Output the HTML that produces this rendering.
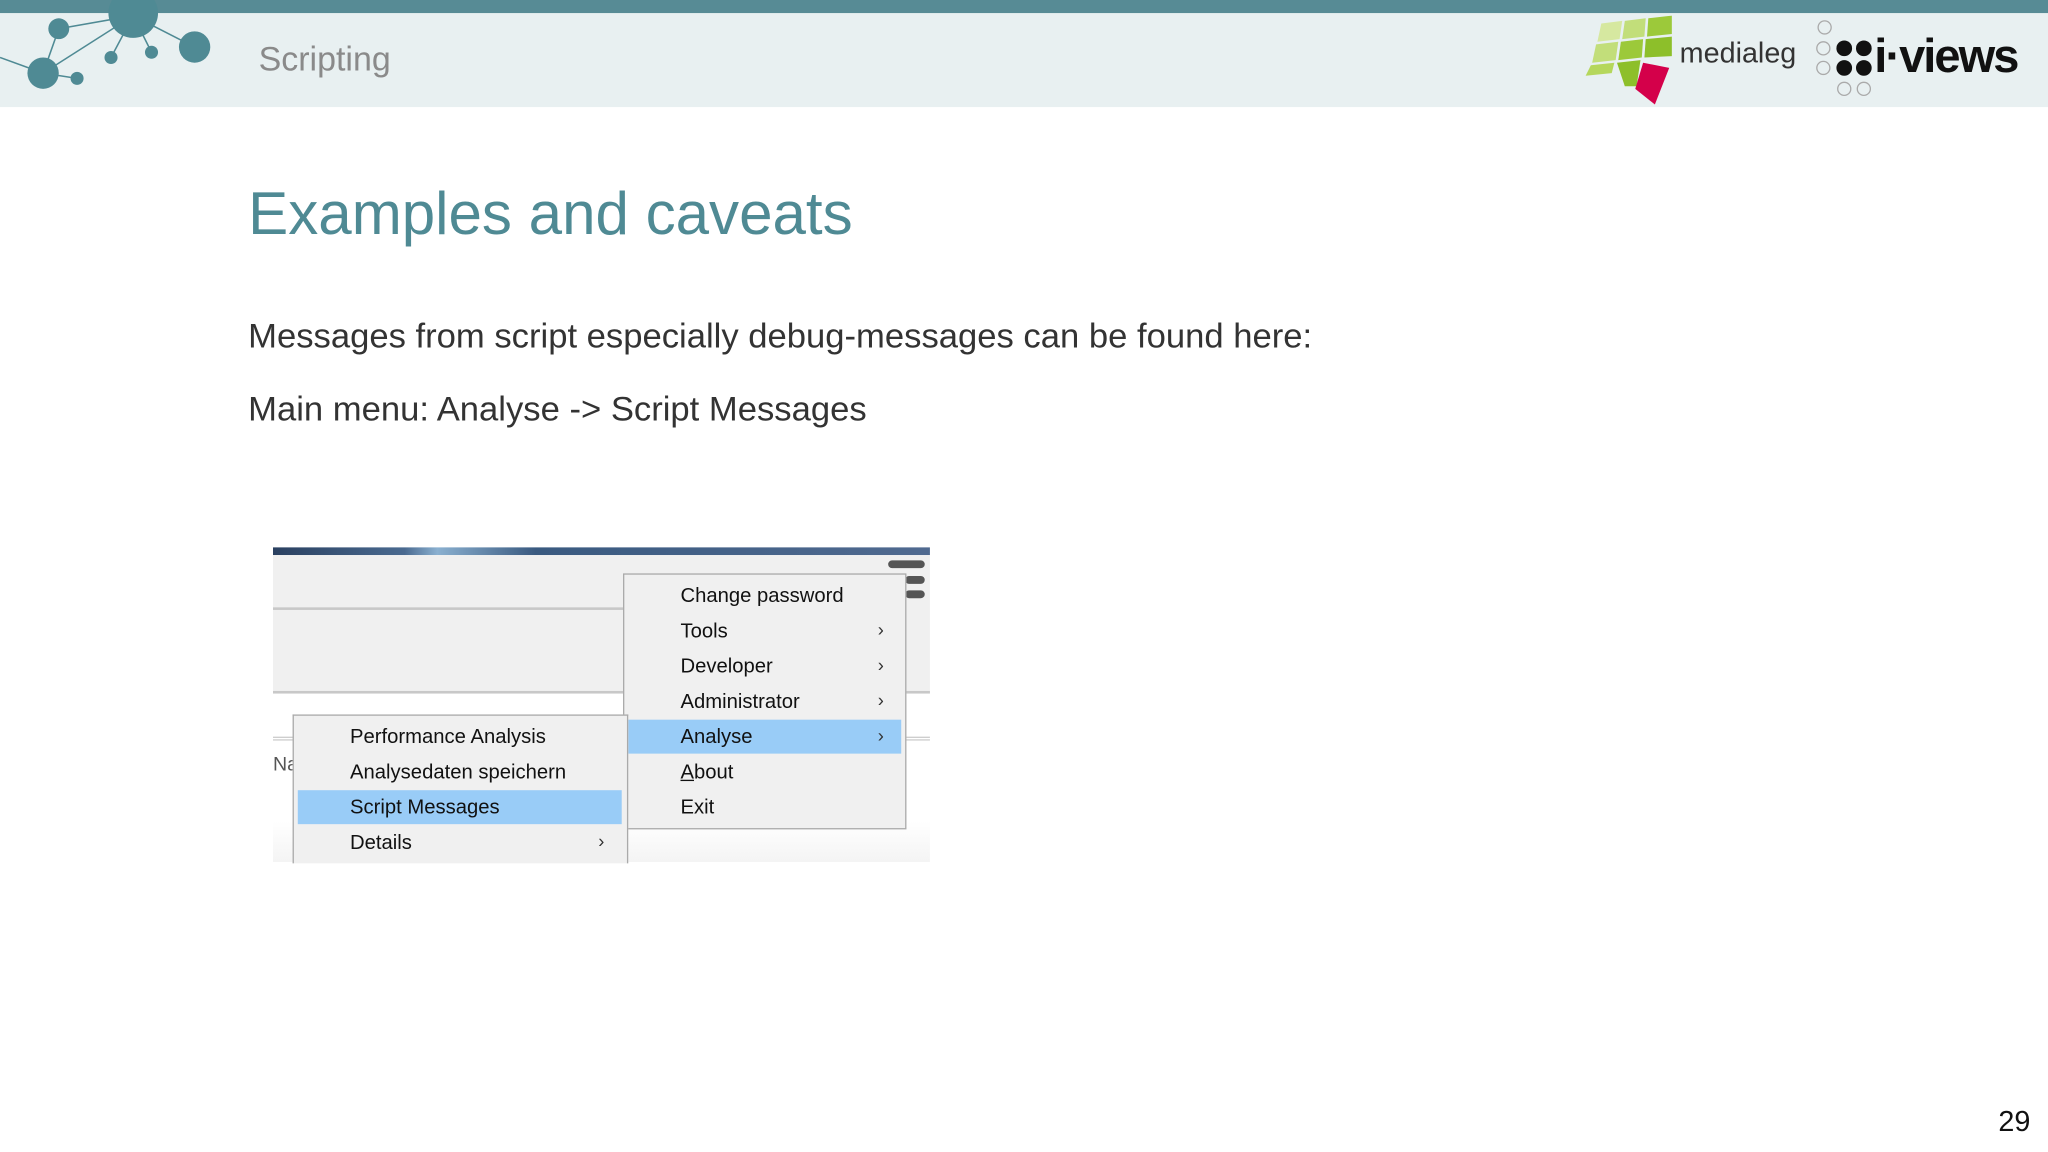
<!DOCTYPE html>
<html><head><meta charset="utf-8"><style>
*{margin:0;padding:0;box-sizing:border-box}
html,body{width:2048px;height:1152px;overflow:hidden;background:#fff}
#s{position:absolute;left:0;top:0;width:1568px;height:882px;transform:scale(1.30612);transform-origin:0 0;font-family:"Liberation Sans",sans-serif}
.a{position:absolute;white-space:nowrap}
.mi{position:absolute;font-size:15.5px;color:#111;line-height:27px;height:27px}
.ar{position:absolute;font-size:14px;color:#333;line-height:27px}
</style></head><body><div id="s">
<div class="a" style="left:0;top:0;width:1568px;height:82px;background:#e8f0f1"></div>
<div class="a" style="left:0;top:0;width:1568px;height:10px;background:#578b95"></div>
<svg class="a" style="left:0;top:0" width="170" height="82">
<g stroke="#4f8a94" stroke-width="1.2" fill="none">
<line x1="0" y1="44" x2="33" y2="56"/><line x1="33" y1="56" x2="45" y2="22"/><line x1="33" y1="56" x2="59" y2="60"/><line x1="33" y1="56" x2="102" y2="12"/><line x1="45" y1="22" x2="102" y2="12"/><line x1="102" y1="12" x2="149" y2="36"/><line x1="102" y1="12" x2="85" y2="44"/><line x1="102" y1="12" x2="116" y2="40"/></g>
<g fill="#4f8a94"><circle cx="45" cy="22" r="8"/><circle cx="102" cy="10" r="19"/><circle cx="149" cy="36" r="12"/><circle cx="33" cy="56" r="12"/><circle cx="59" cy="60" r="5"/><circle cx="85" cy="44" r="5"/><circle cx="116" cy="40" r="5"/></g></svg>
<div class="a" style="left:198px;top:30px;font-size:26px;color:#8a8a8a">Scripting</div>
<svg class="a" style="left:1212px;top:12px" width="72" height="70">
<polygon points="14,6 30,4 28,18 11,20" fill="#d6e8a0"/><polygon points="32,4 48,2 47,16 30,18" fill="#c2de7a"/><polygon points="50,2 68,0 68,14 49,16" fill="#9cc93a"/>
<polygon points="10,22 27,20 25,34 7,36" fill="#c2de7a"/><polygon points="29,20 46,18 45,32 27,34" fill="#9cc93a"/><polygon points="48,18 68,16 68,31 47,32" fill="#8dbf2a"/>
<polygon points="6,38 24,36 22,44 2,46" fill="#b5d75c"/><polygon points="26,36 44,34 41,54 32,54" fill="#8dbf2a"/><polygon points="46,36 66,40 55,68 40,56" fill="#d4004a"/></svg>
<div class="a" style="left:1286px;top:28px;font-size:22px;color:#333">medialeg</div>
<svg class="a" style="left:1388px;top:14px" width="50" height="62">
<g fill="none" stroke="#aaa" stroke-width="1"><circle cx="9" cy="7" r="5"/><circle cx="8" cy="23" r="5"/><circle cx="8" cy="38" r="5"/><circle cx="24" cy="54" r="5"/><circle cx="39" cy="54" r="5"/></g>
<g fill="#111"><circle cx="24" cy="23" r="6"/><circle cx="39" cy="23" r="6"/><circle cx="24" cy="38" r="6"/><circle cx="39" cy="38" r="6"/></g></svg>
<div class="a" style="left:1435px;top:22px;font-size:36px;font-weight:bold;color:#111;letter-spacing:-1.5px">i·views</div>

<div class="a" style="left:190px;top:136px;font-size:46px;color:#4f8a94">Examples and caveats</div>
<div class="a" style="left:190px;top:242px;font-size:26.5px;color:#333">Messages from script especially debug-messages can be found here:</div>
<div class="a" style="left:190px;top:298px;font-size:26.5px;color:#333">Main menu: Analyse -&gt; Script Messages</div>

<div class="a" style="left:209px;top:419px;width:503px;height:241px;background:#fff;overflow:hidden">
<div class="a" style="left:0;top:0;width:503px;height:6px;background:linear-gradient(90deg,#2a4060,#4a6a90 20%,#8ab0d0 25%,#3a5a80 40%,#506a90 100%)"></div>
<div class="a" style="left:0;top:6px;width:503px;height:106px;background:#f0f0f0;border-bottom:2px solid #c8c8c8"></div>
<div class="a" style="left:0;top:46px;width:270px;height:2px;background:#c8c8c8"></div>
<div class="a" style="left:0;top:145px;width:20px;height:3px;border-top:1px solid #ccc;border-bottom:1px solid #ccc"></div>
<div class="a" style="left:480px;top:145px;width:23px;height:3px;border-top:1px solid #ccc;border-bottom:1px solid #ccc"></div>
<div class="a" style="left:0;top:158px;font-size:15px;color:#555">Na</div>
<div class="a" style="left:471px;top:10px;width:28px;height:6px;border-radius:3px;background:#555"></div>
<div class="a" style="left:484px;top:22px;width:15px;height:6px;border-radius:3px;background:#555"></div>
<div class="a" style="left:484px;top:33px;width:15px;height:6px;border-radius:3px;background:#555"></div>
<div class="a" style="left:0;top:210px;width:503px;height:31px;background:linear-gradient(#fff,#f4f4f4)"></div>
</div>
<div class="a" style="left:477px;top:439px;width:217px;height:196px;background:#f0f0f0;border:1px solid #aaa"></div>
<div class="a" style="left:481px;top:551px;width:209px;height:26px;background:#99ccf7"></div>
<div class="mi" style="left:521px;top:443px">Change password</div>
<div class="mi" style="left:521px;top:470px">Tools</div><div class="ar" style="left:672px;top:469px">›</div>
<div class="mi" style="left:521px;top:497px">Developer</div><div class="ar" style="left:672px;top:496px">›</div>
<div class="mi" style="left:521px;top:524px">Administrator</div><div class="ar" style="left:672px;top:523px">›</div>
<div class="mi" style="left:521px;top:551px">Analyse</div><div class="ar" style="left:672px;top:550px">›</div>
<div class="mi" style="left:521px;top:578px"><u>A</u>bout</div>
<div class="mi" style="left:521px;top:605px">Exit</div>
<div class="a" style="left:224px;top:547px;width:257px;height:114px;background:#f0f0f0;border:1px solid #aaa;border-bottom:none"></div>
<div class="a" style="left:228px;top:605px;width:248px;height:26px;background:#99ccf7"></div>
<div class="mi" style="left:268px;top:551px">Performance Analysis</div>
<div class="mi" style="left:268px;top:578px">Analysedaten speichern</div>
<div class="mi" style="left:268px;top:605px">Script Messages</div>
<div class="mi" style="left:268px;top:632px">Details</div><div class="ar" style="left:458px;top:631px">›</div>

<div class="a" style="left:1530px;top:846px;font-size:22px;color:#111">29</div>
</div></body></html>
